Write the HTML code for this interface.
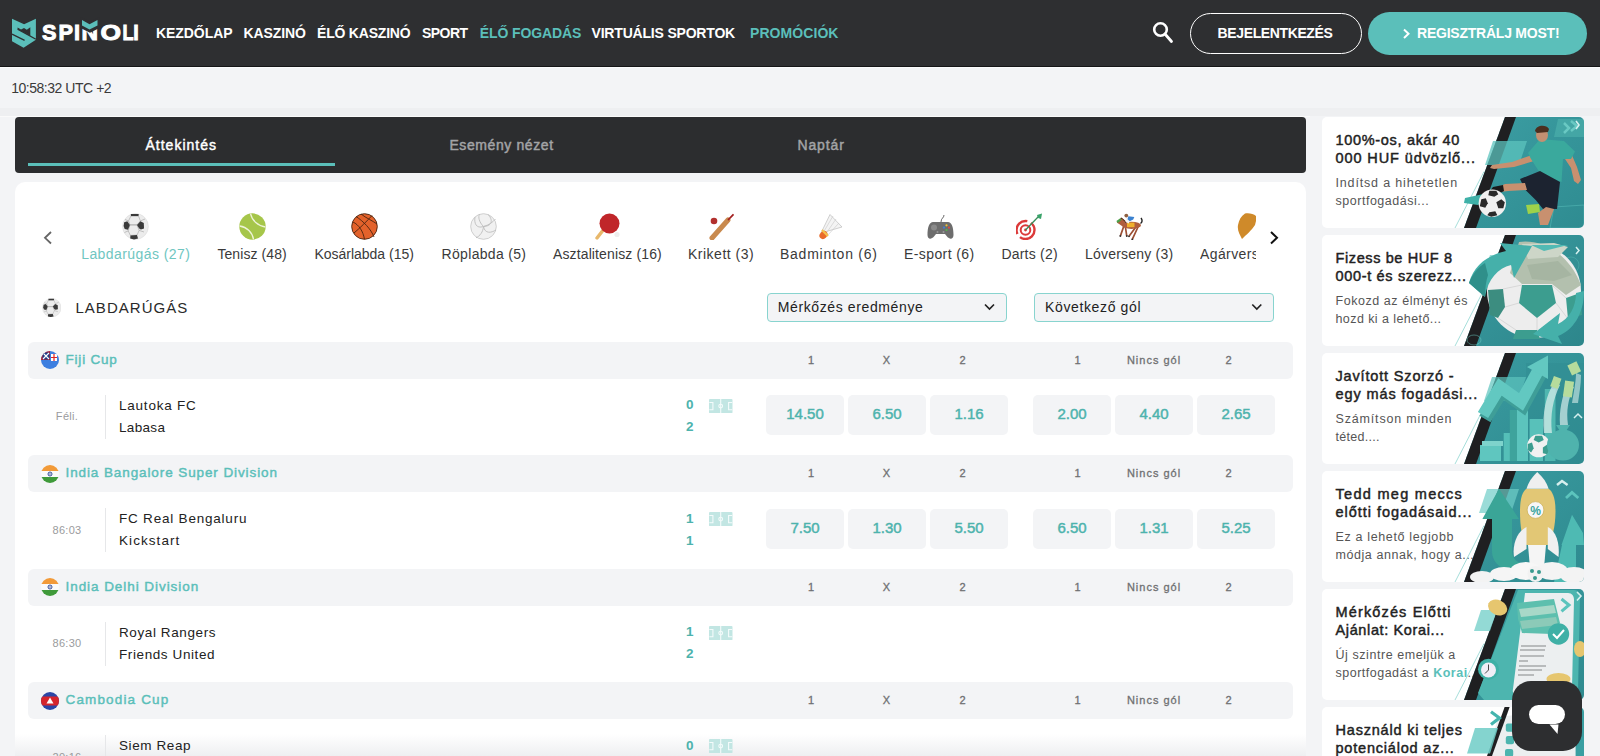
<!DOCTYPE html>
<html><head><meta charset="utf-8">
<style>
*{box-sizing:border-box;margin:0;padding:0}
html,body{width:1600px;height:756px;overflow:hidden;background:#f3f4f6;font-family:"Liberation Sans",sans-serif;color:#222}
.a{position:absolute;white-space:nowrap;line-height:1}
#hdr{position:absolute;left:0;top:0;width:1600px;height:67px;background:#2e2f31;border-bottom:1.5px solid #151617}
.nav{position:absolute;top:26px;font-weight:bold;font-size:14px;color:#fff;white-space:nowrap;line-height:1}
.nav.t{color:#5bbfba}
#tabs{position:absolute;left:15px;top:117px;width:1291px;height:56px;background:#2c2d2f;border-radius:4px}
.tab{position:absolute;top:138px;font-size:14px;color:#a3a4a6;-webkit-text-stroke:0.45px currentColor;white-space:nowrap;line-height:1}
#card{position:absolute;left:15px;top:182px;width:1291px;height:600px;background:linear-gradient(to bottom,#fff 0,#fff 552px,#eeeff1 574px);border-radius:10px}
.sp{position:absolute;top:247px;font-size:14px;color:#3a3a3a;white-space:nowrap;line-height:1}
.ico{position:absolute;top:213px;width:27px;height:27px}
.lg{position:absolute;left:28px;width:1265px;height:37px;background:#f3f4f6;border-radius:6px}
.lgn{position:absolute;left:37.5px;top:11px;font-size:13.5px;-webkit-text-stroke:0.45px currentColor;color:#5bbfba;white-space:nowrap;line-height:1}
.hl{position:absolute;top:13px;font-size:11px;-webkit-text-stroke:0.3px currentColor;color:#6f7072;line-height:1;white-space:nowrap;transform:translateX(-50%);letter-spacing:1.0px}
.flag{position:absolute;left:13px;top:9.5px;width:18px;height:18px;border-radius:50%;overflow:hidden}
.mt{position:absolute;left:0;width:1291px;height:76px}
.tm{position:absolute;font-size:11px;color:#9a9b9d;line-height:1;white-space:nowrap;transform:translateX(-50%);letter-spacing:0.3px}
.dv{position:absolute;left:105px;width:1px;background:#e6e7e9}
.team{position:absolute;left:119px;font-size:13.5px;color:#222;line-height:1;white-space:nowrap}
.sc{position:absolute;font-size:13.5px;font-weight:bold;color:#4db3ad;line-height:1}
.fld{position:absolute;width:23.5px;height:14.2px}
.odd{position:absolute;width:78px;height:40px;background:#f3f4f6;border-radius:5px;color:#4db3ad;-webkit-text-stroke:0.45px currentColor;font-size:15px;text-align:center;line-height:38px}
.promo{position:absolute;left:1322px;width:262px;height:111px;background:#fff;border-radius:5px;overflow:hidden}
.pt{position:absolute;left:13.5px;top:14px;letter-spacing:0.61px;font-size:14.5px;-webkit-text-stroke:0.45px currentColor;color:#222;line-height:18px;width:145px;white-space:nowrap}
.pd{position:absolute;left:13.5px;top:56.5px;letter-spacing:0.74px;font-size:12.5px;color:#555;line-height:18px;white-space:nowrap}
.pimg{position:absolute;left:130px;top:0;width:132px;height:111px}
</style></head><body>
<div id="hdr">
  <svg class="a" style="left:8px;top:14px" width="136" height="38" viewBox="8 14 136 38">
    <polygon points="12,18.8 24.1,24.3 35.9,18.8 35.9,39.7 23.6,47.7 12,41.2" fill="#5bbfba"/>
    <line x1="12" y1="34.1" x2="24.6" y2="40.3" stroke="#2e2f31" stroke-width="1.3"/>
    <line x1="17.6" y1="29.1" x2="35.9" y2="39.2" stroke="#2e2f31" stroke-width="1.3"/>
    <polygon points="17.6,27.4 21,29.4 24,28 26.8,29.8 30.3,27.3 30.3,36.1 17.6,29.1" fill="#2e2f31"/>
    <g font-family="Liberation Sans" font-weight="bold" font-size="22.8" fill="#fff" stroke="#fff" stroke-width="1" lengthAdjust="spacingAndGlyphs">
    <text x="42" y="40" textLength="14.5" lengthAdjust="spacingAndGlyphs">S</text>
    <text x="58.5" y="40" textLength="14.5" lengthAdjust="spacingAndGlyphs">P</text>
    <text x="74" y="40" textLength="6" lengthAdjust="spacingAndGlyphs">I</text>
    <text x="81.5" y="40" textLength="16.5" lengthAdjust="spacingAndGlyphs">N</text>
    <text x="100.5" y="40" textLength="20.5" lengthAdjust="spacingAndGlyphs">O</text>
    <text x="122.5" y="40" textLength="11" lengthAdjust="spacingAndGlyphs">L</text>
    <text x="133.2" y="40" textLength="5.5" lengthAdjust="spacingAndGlyphs">I</text>
    </g>
    <polygon points="80.5,17 90,21.8 99.5,17 99.5,28 90,32.8 80.5,28" fill="#2e2f31"/>
    <polygon points="82,20 89.5,24.2 97.5,20 97.5,25.5 89.5,29.6 82,25.5" fill="#5bbfba"/>
  </svg>
  <div class="nav" style="left:156px;letter-spacing:-0.07px">KEZDŐLAP</div>
  <div class="nav" style="left:243.5px;letter-spacing:-0.1px">KASZINÓ</div>
  <div class="nav" style="left:317px;letter-spacing:-0.2px">ÉLŐ KASZINÓ</div>
  <div class="nav" style="left:422px;letter-spacing:-0.55px">SPORT</div>
  <div class="nav t" style="left:479.7px;letter-spacing:-0.1px">ÉLŐ FOGADÁS</div>
  <div class="nav" style="left:591.5px;letter-spacing:-0.19px">VIRTUÁLIS SPORTOK</div>
  <div class="nav t" style="left:750px;letter-spacing:0.07px">PROMÓCIÓK</div>
  <svg class="a" style="left:1148px;top:18px" width="28" height="28" viewBox="1148 18 28 28">
    <circle cx="1160.5" cy="29.5" r="6.3" fill="none" stroke="#fff" stroke-width="2.6"/>
    <line x1="1165" y1="34" x2="1171.5" y2="41.5" stroke="#fff" stroke-width="2.8" stroke-linecap="round"/>
  </svg>
  <div class="a" style="left:1189.5px;top:13px;width:172px;height:41px;border:1.9px solid #fff;border-radius:21px"></div>
  <div class="nav" style="left:1217.6px;letter-spacing:-0.38px">BEJELENTKEZÉS</div>
  <div class="a" style="left:1367.5px;top:12px;width:219.5px;height:43px;background:#5bbfba;border-radius:22px"></div>
  <svg class="a" style="left:1400px;top:26px" width="14" height="15" viewBox="1400 26 14 15">
    <polyline points="1404,29.5 1408.5,33.7 1404,38" fill="none" stroke="#fff" stroke-width="2"/>
  </svg>
  <div class="nav" style="left:1417px;letter-spacing:-0.23px">REGISZTRÁLJ MOST!</div>
</div>
<div class="a" style="left:0;top:67px;width:1600px;height:1px;background:#fbfbfc"></div>
<div class="a" style="left:0;top:108px;width:1600px;height:8px;background:#eeeff1"></div>
<div class="a" style="left:0;top:116px;width:1310px;height:1px;background:#fafafa"></div>
<div class="a" style="left:11.2px;top:81px;font-size:14px;color:#3a3a3a;letter-spacing:-0.47px">10:58:32 UTC +2</div>
<div id="tabs">
  <div class="a" style="left:13px;top:46.3px;width:307.3px;height:3.2px;background:#5bbfba"></div>
</div>
<div class="tab" style="left:145.5px;color:#fff;letter-spacing:1.0px">Áttekintés</div>
<div class="tab" style="left:449.4px;letter-spacing:0.6px">Esemény nézet</div>
<div class="tab" style="left:797.4px;letter-spacing:0.88px">Naptár</div>
<div id="card"></div>
<!-- carousel -->
<svg class="a" style="left:40px;top:228px" width="16" height="20" viewBox="40 228 16 20"><polyline points="51,232 45,237.8 51,243.5" fill="none" stroke="#666" stroke-width="1.8"/></svg>
<svg class="a" style="left:1265px;top:228px" width="18" height="20" viewBox="1265 228 18 20"><polyline points="1271,232 1277,237.8 1271,243.5" fill="none" stroke="#111" stroke-width="2"/></svg>
<!-- soccer -->
<svg class="ico" style="left:122px" viewBox="0 0 27 27">
  <circle cx="13.5" cy="13.5" r="12.9" fill="#ececec" stroke="#d6d6d6" stroke-width="0.5"/>
  <g fill="none" stroke="#9a9a9a" stroke-width="0.55"><polygon points="8.9,3.1 16.5,3.1 18.4,7.9 15,11.9 7.9,11.9 6.5,7.9"/><polygon points="7.9,11.9 15,11.9 17.2,17.4 15,22.1 8.4,22.4 6.2,17.9"/><path d="M6.5,7.9 L3,6.5 M18.4,7.9 L23,6 M17.2,17.4 L22,19 M6.2,17.9 L2.5,19.5"/></g>
  <polygon points="8.9,1 16.7,1 16.5,3.1 8.9,3.1" fill="#3a3a3a"/>
  <polygon points="2.2,9.3 5.3,8.3 7.9,11.9 6,16.7 2.7,16 1.6,13" fill="#3a3a3a"/>
  <polygon points="15,11.9 18.4,8.3 21.8,10 22,15.5 18.9,16.4 17.2,15.5" fill="#3a3a3a"/>
  <polygon points="8.4,22.4 15,22.1 16,25.6 12,26.4 8.2,25.6" fill="#3a3a3a"/>
</svg>
<div class="sp" style="left:81.2px;letter-spacing:0.42px;color:#6fc6c1">Labdarúgás (27)</div>
<!-- tennis -->
<svg class="ico" style="left:238.5px" viewBox="0 0 27 27">
  <circle cx="13.5" cy="13.5" r="13.2" fill="#a6c64a"/>
  <path d="M11.5,0.6 C13,7.5 19,13 26.4,14" fill="none" stroke="#eef3d8" stroke-width="1.3"/>
  <path d="M0.6,13 C8,14 13.5,19.5 14.5,26.4" fill="none" stroke="#eef3d8" stroke-width="1.3"/>
</svg>
<div class="sp" style="left:217.4px;letter-spacing:0.08px">Tenisz (48)</div>
<!-- basketball -->
<svg class="ico" style="left:351px" viewBox="0 0 27 27">
  <circle cx="13.5" cy="13.5" r="12.8" fill="#e3622b"/>
  <g fill="none" stroke="#4a2410" stroke-width="0.9">
    <circle cx="13.5" cy="13.5" r="12.8"/>
    <path d="M5,3.5 C12,8 20,16 23,24"/><path d="M2,9 C8,12 12,18 13.5,26.3"/><path d="M10,1 C15,5 22,8 26,11"/><path d="M3,20 C9,15 17,7 21,2.5"/>
  </g>
</svg>
<div class="sp" style="left:314.4px;letter-spacing:-0.01px">Kosárlabda (15)</div>
<!-- volleyball -->
<svg class="ico" style="left:470px" viewBox="0 0 27 27">
  <circle cx="13.5" cy="13.5" r="12.8" fill="#f1f1f1" stroke="#c9c9c9" stroke-width="0.9"/>
  <g fill="none" stroke="#bdbdbd" stroke-width="0.9">
    <path d="M13.5,13.5 C9,9 8,4 9.5,1.3"/><path d="M13.5,13.5 C19,12 23,9 25.5,6"/><path d="M13.5,13.5 C13,19 10,23 6,24.8"/>
    <path d="M5,4 C4,10 6,16 13.5,13.5"/><path d="M18,1.5 C22,5 24,13 13.5,13.5"/><path d="M26,17 C21,20 15,21 13.5,13.5"/>
  </g>
</svg>
<div class="sp" style="left:441.6px;letter-spacing:0.31px">Röplabda (5)</div>
<!-- table tennis -->
<svg class="ico" style="left:594px" viewBox="0 0 27 27">
  <path d="M3,25 L10,16" stroke="#e8b86c" stroke-width="3.4" stroke-linecap="round"/>
  <circle cx="15.5" cy="10.5" r="10" fill="#c0262a"/>
  <circle cx="23" cy="21.5" r="2.6" fill="#eeeeee"/>
</svg>
<div class="sp" style="left:553px;letter-spacing:0.125px">Asztalitenisz (16)</div>
<!-- cricket -->
<svg class="ico" style="left:707.5px" viewBox="0 0 27 27">
  <path d="M4,25 L20,7" stroke="#c98a4e" stroke-width="5" stroke-linecap="round"/>
  <path d="M20.5,6.5 L25,1.8" stroke="#a32020" stroke-width="1.8" stroke-linecap="round"/>
  <circle cx="6" cy="8" r="3.3" fill="#b2302e"/>
</svg>
<div class="sp" style="left:688px;letter-spacing:0.5px">Krikett (3)</div>
<!-- badminton -->
<svg class="ico" style="left:816px" viewBox="0 0 27 27">
  <path d="M5,20 L14,1.5 L26,14 Z" fill="#f4f4f4" stroke="#bdbdbd" stroke-width="0.7"/>
  <g stroke="#c7c7c7" stroke-width="0.6"><path d="M7,20 L17,3M9,22 L20,6M11,23 L23,10"/></g>
  <ellipse cx="7.5" cy="22" rx="4.4" ry="3.6" transform="rotate(-45 7.5 22)" fill="#e96a2a"/>
  <path d="M6,17 L12,23" stroke="#f5c14a" stroke-width="2.2"/>
</svg>
<div class="sp" style="left:780px;letter-spacing:0.75px">Badminton (6)</div>
<!-- esport -->
<svg class="ico" style="left:926.5px" viewBox="0 0 27 27">
  <path d="M14,9 C14,5 17,5 17,2" fill="none" stroke="#555" stroke-width="0.9"/>
  <path d="M6,9 H21 C24.5,9 26.5,14 26.5,22 C26.5,26 23,27 20,23.5 L18,21 H9 L7,23.5 C4,27 0.5,26 0.5,22 C0.5,14 2.5,9 6,9Z" fill="#6d6d6d"/>
  <circle cx="7" cy="14.5" r="3" fill="#8a8a8a"/>
  <circle cx="19.5" cy="12.3" r="1.1" fill="#f2c230"/><circle cx="22" cy="14.6" r="1.1" fill="#e2483b"/><circle cx="17" cy="14.6" r="1.1" fill="#3f7fd6"/><circle cx="19.5" cy="17" r="1.1" fill="#52b84a"/>
  <circle cx="10.5" cy="19" r="1" fill="#999"/><circle cx="16.5" cy="19" r="1" fill="#999"/>
</svg>
<div class="sp" style="left:904px;letter-spacing:0.4px">E-sport (6)</div>
<!-- darts -->
<svg class="ico" style="left:1016px" viewBox="0 0 27 27">
  <circle cx="9.5" cy="17" r="9" fill="none" stroke="#dc3a3a" stroke-width="2.4" stroke-dasharray="20 4"/>
  <circle cx="9.5" cy="17" r="4.8" fill="none" stroke="#dc3a3a" stroke-width="2"/>
  <circle cx="9.5" cy="17" r="1.4" fill="#dc3a3a"/>
  <path d="M9.5,17 L23,3" stroke="#3a8c5a" stroke-width="1.3"/>
  <polygon points="21,2 26,0.5 25,6 22,5" fill="#3aa36a"/>
</svg>
<div class="sp" style="left:1001.4px;letter-spacing:0.22px">Darts (2)</div>
<!-- horse -->
<svg class="ico" style="left:1115.5px" viewBox="0 0 27 27">
  <g stroke="#9c4f33" stroke-width="1.7" stroke-linecap="round" fill="none"><path d="M7.5,14 L4.5,22.6"/><path d="M9.5,14.5 L10.7,22.6"/><path d="M19.5,14.5 L13.2,23"/><path d="M22,14 L16.4,26.2"/></g>
  <g fill="#333"><circle cx="4.3" cy="23" r="0.9"/><circle cx="10.8" cy="23" r="0.9"/><circle cx="13" cy="23.3" r="0.9"/><circle cx="16.3" cy="26.3" r="0.9"/></g>
  <ellipse cx="15.5" cy="12.3" rx="9.5" ry="3.6" fill="#b05e3d"/>
  <path d="M5,4.5 C8,6 10,8.5 12,10 L10,15 L6,13 C4,11.5 2,10.5 0.8,9.5Z" fill="#b05e3d"/>
  <path d="M5,5 C7,6 9,8 10,10" stroke="#3a2a20" stroke-width="1" fill="none"/>
  <path d="M1,9 L5,6.2" stroke="#4aa04a" stroke-width="2.2"/>
  <path d="M24.5,10.5 C26.5,9 26.5,7 25,5" stroke="#222" stroke-width="1.4" fill="none"/>
  <rect x="11" y="9.6" width="7.5" height="4.6" fill="#efb02e"/>
  <path d="M10.5,4.5 L13.5,7.5 L13,10.5 L9.5,9Z" fill="#f4f4f4"/>
  <path d="M12.3,3.2 L18.3,4 L17.2,6.6 L13.8,8.2 L11.5,6.2Z" fill="#3b82d0"/>
  <circle cx="10.3" cy="2.6" r="1.9" fill="#8f5f40"/>
</svg>
<div class="sp" style="left:1085px;letter-spacing:0.21px">Lóverseny (3)</div>
<div class="a" style="left:1200px;top:200px;width:55.5px;height:70px;overflow:hidden">
  <svg class="a" style="left:37px;top:13px" width="27" height="27" viewBox="0 0 27 27">
    <path d="M8,0.5 C12,-0.5 18,1 20,4 L18,12 C15,17 9,22 5,26 C3,22 0,18 1,12 C2,7 4,3 8,0.5Z" fill="#cf8a2a"/>
  </svg>
  <div class="sp" style="left:0;top:47px;letter-spacing:0.4px">Agárverseny (2)</div>
</div>
<!-- section header -->
<svg class="a" style="left:41.5px;top:297.5px" width="19.5" height="19.5" viewBox="0 0 27 27">
  <circle cx="13.5" cy="13.5" r="12.9" fill="#ececec" stroke="#d6d6d6" stroke-width="0.5"/>
  <g fill="none" stroke="#9a9a9a" stroke-width="0.55"><polygon points="8.9,3.1 16.5,3.1 18.4,7.9 15,11.9 7.9,11.9 6.5,7.9"/><polygon points="7.9,11.9 15,11.9 17.2,17.4 15,22.1 8.4,22.4 6.2,17.9"/><path d="M6.5,7.9 L3,6.5 M18.4,7.9 L23,6 M17.2,17.4 L22,19 M6.2,17.9 L2.5,19.5"/></g>
  <polygon points="8.9,1 16.7,1 16.5,3.1 8.9,3.1" fill="#3a3a3a"/>
  <polygon points="2.2,9.3 5.3,8.3 7.9,11.9 6,16.7 2.7,16 1.6,13" fill="#3a3a3a"/>
  <polygon points="15,11.9 18.4,8.3 21.8,10 22,15.5 18.9,16.4 17.2,15.5" fill="#3a3a3a"/>
  <polygon points="8.4,22.4 15,22.1 16,25.6 12,26.4 8.2,25.6" fill="#3a3a3a"/>
</svg>
<div class="a" style="left:75.4px;top:300px;font-size:15px;color:#2a2a2a;letter-spacing:1.05px">LABDARÚGÁS</div>
<div class="a" style="left:767px;top:293px;width:240px;height:29px;background:#f3f4f6;border:1.5px solid #88d4cf;border-radius:4px"></div>
<div class="a" style="left:777.7px;top:300px;font-size:14px;color:#222;letter-spacing:0.62px">Mérkőzés eredménye</div>
<svg class="a" style="left:982px;top:301px" width="15" height="12" viewBox="982 301 15 12"><polyline points="985,304.5 989.5,309 994,304.5" fill="none" stroke="#222" stroke-width="1.7"/></svg>
<div class="a" style="left:1034px;top:293px;width:240px;height:29px;background:#f3f4f6;border:1.5px solid #88d4cf;border-radius:4px"></div>
<div class="a" style="left:1045px;top:300px;font-size:14px;color:#222;letter-spacing:0.63px">Következő gól</div>
<svg class="a" style="left:1249px;top:301px" width="15" height="12" viewBox="1249 301 15 12"><polyline points="1252.3,304.5 1256.8,309 1261.3,304.5" fill="none" stroke="#222" stroke-width="1.7"/></svg>
<!-- leagues -->
<div class="lg" style="top:341.5px"><svg class="flag" viewBox="0 0 18 18"><rect width="18" height="18" fill="#3d7fe0"/><rect x="0" y="0" width="9" height="9" fill="#c8202a"/><rect x="1.5" y="1.5" width="7" height="7" fill="#1a3d8a"/><path d="M2,2 L8,8M8,2 L2,8" stroke="#fff" stroke-width="1.2"/><rect x="10" y="3" width="6" height="7" fill="#fff"/><path d="M13,3 V10M10,6.5 H16" stroke="#d22" stroke-width="1.2"/></svg><div class="lgn" style="letter-spacing:0.8px">Fiji Cup</div>
<div class="hl" style="left:783.5px">1</div>
<div class="hl" style="left:859px">X</div>
<div class="hl" style="left:935px">2</div>
<div class="hl" style="left:1050px">1</div>
<div class="hl" style="left:1126px">Nincs gól</div>
<div class="hl" style="left:1201px">2</div>
</div>
<div class="tm" style="left:67px;top:411.0px">Féli.</div>
<div class="dv" style="top:394.5px;height:44px"></div>
<div class="team" style="top:398.5px;letter-spacing:0.78px">Lautoka FC</div>
<div class="team" style="top:420.5px;letter-spacing:0.32px">Labasa</div>
<div class="sc" style="left:686px;top:398.0px">0</div>
<div class="sc" style="left:686px;top:420.0px">2</div>
<svg class="fld" style="left:709.3px;top:398.6px" viewBox="0 0 23.5 14.2"><rect width="23.5" height="14.2" rx="1" fill="#c2e6e3"/><g fill="none" stroke="#f4fbfb" stroke-width="1.1"><path d="M11.7,0V14.2"/><circle cx="11.7" cy="7.1" r="1.9"/><path d="M0.3,3.5 H3.9 V10.7 H0.3"/><path d="M23.2,3.5 H19.6 V10.7 H23.2"/></g></svg>
<div class="odd" style="left:766px;top:395.0px">14.50</div>
<div class="odd" style="left:848px;top:395.0px">6.50</div>
<div class="odd" style="left:930px;top:395.0px">1.16</div>
<div class="odd" style="left:1033px;top:395.0px">2.00</div>
<div class="odd" style="left:1115px;top:395.0px">4.40</div>
<div class="odd" style="left:1197px;top:395.0px">2.65</div>
<div class="lg" style="top:455px"><svg class="flag" viewBox="0 0 18 18"><rect width="18" height="6" fill="#f29a38"/><rect y="6" width="18" height="6" fill="#fafafa"/><rect y="12" width="18" height="6" fill="#3f9a3a"/><circle cx="9" cy="9" r="2" fill="none" stroke="#1e3a8c" stroke-width="0.9"/><circle cx="9" cy="9" r="0.7" fill="#1e3a8c"/></svg><div class="lgn" style="letter-spacing:0.9px">India Bangalore Super Division</div>
<div class="hl" style="left:783.5px">1</div>
<div class="hl" style="left:859px">X</div>
<div class="hl" style="left:935px">2</div>
<div class="hl" style="left:1050px">1</div>
<div class="hl" style="left:1126px">Nincs gól</div>
<div class="hl" style="left:1201px">2</div>
</div>
<div class="tm" style="left:67px;top:524.5px">86:03</div>
<div class="dv" style="top:508px;height:44px"></div>
<div class="team" style="top:512px;letter-spacing:0.79px">FC Real Bengaluru</div>
<div class="team" style="top:534px;letter-spacing:1.07px">Kickstart</div>
<div class="sc" style="left:686px;top:511.5px">1</div>
<div class="sc" style="left:686px;top:533.5px">1</div>
<svg class="fld" style="left:709.3px;top:512.1px" viewBox="0 0 23.5 14.2"><rect width="23.5" height="14.2" rx="1" fill="#c2e6e3"/><g fill="none" stroke="#f4fbfb" stroke-width="1.1"><path d="M11.7,0V14.2"/><circle cx="11.7" cy="7.1" r="1.9"/><path d="M0.3,3.5 H3.9 V10.7 H0.3"/><path d="M23.2,3.5 H19.6 V10.7 H23.2"/></g></svg>
<div class="odd" style="left:766px;top:508.5px">7.50</div>
<div class="odd" style="left:848px;top:508.5px">1.30</div>
<div class="odd" style="left:930px;top:508.5px">5.50</div>
<div class="odd" style="left:1033px;top:508.5px">6.50</div>
<div class="odd" style="left:1115px;top:508.5px">1.31</div>
<div class="odd" style="left:1197px;top:508.5px">5.25</div>
<div class="lg" style="top:568.5px"><svg class="flag" viewBox="0 0 18 18"><rect width="18" height="6" fill="#f29a38"/><rect y="6" width="18" height="6" fill="#fafafa"/><rect y="12" width="18" height="6" fill="#3f9a3a"/><circle cx="9" cy="9" r="2" fill="none" stroke="#1e3a8c" stroke-width="0.9"/><circle cx="9" cy="9" r="0.7" fill="#1e3a8c"/></svg><div class="lgn" style="letter-spacing:0.94px">India Delhi Division</div>
<div class="hl" style="left:783.5px">1</div>
<div class="hl" style="left:859px">X</div>
<div class="hl" style="left:935px">2</div>
<div class="hl" style="left:1050px">1</div>
<div class="hl" style="left:1126px">Nincs gól</div>
<div class="hl" style="left:1201px">2</div>
</div>
<div class="tm" style="left:67px;top:638.0px">86:30</div>
<div class="dv" style="top:621.5px;height:44px"></div>
<div class="team" style="top:625.5px;letter-spacing:0.6px">Royal Rangers</div>
<div class="team" style="top:647.5px;letter-spacing:0.6px">Friends United</div>
<div class="sc" style="left:686px;top:625.0px">1</div>
<div class="sc" style="left:686px;top:647.0px">2</div>
<svg class="fld" style="left:709.3px;top:625.6px" viewBox="0 0 23.5 14.2"><rect width="23.5" height="14.2" rx="1" fill="#c2e6e3"/><g fill="none" stroke="#f4fbfb" stroke-width="1.1"><path d="M11.7,0V14.2"/><circle cx="11.7" cy="7.1" r="1.9"/><path d="M0.3,3.5 H3.9 V10.7 H0.3"/><path d="M23.2,3.5 H19.6 V10.7 H23.2"/></g></svg>
<div class="lg" style="top:682px"><svg class="flag" viewBox="0 0 18 18"><rect width="18" height="18" fill="#2b46a6"/><rect y="4.5" width="18" height="9" fill="#d6242c"/><polygon points="9,5.5 12.5,11.5 5.5,11.5" fill="#fff"/></svg><div class="lgn" style="letter-spacing:1.15px">Cambodia Cup</div>
<div class="hl" style="left:783.5px">1</div>
<div class="hl" style="left:859px">X</div>
<div class="hl" style="left:935px">2</div>
<div class="hl" style="left:1050px">1</div>
<div class="hl" style="left:1126px">Nincs gól</div>
<div class="hl" style="left:1201px">2</div>
</div>
<div class="tm" style="left:67px;top:751.5px">20:16</div>
<div class="dv" style="top:735px;height:44px"></div>
<div class="team" style="top:739px;letter-spacing:0.6px">Siem Reap</div>
<div class="team" style="top:761px;letter-spacing:0.6px">Preah Khan</div>
<div class="sc" style="left:686px;top:738.5px">0</div>
<div class="sc" style="left:686px;top:760.5px">0</div>
<svg class="fld" style="left:709.3px;top:739.1px" viewBox="0 0 23.5 14.2"><rect width="23.5" height="14.2" rx="1" fill="#c2e6e3"/><g fill="none" stroke="#f4fbfb" stroke-width="1.1"><path d="M11.7,0V14.2"/><circle cx="11.7" cy="7.1" r="1.9"/><path d="M0.3,3.5 H3.9 V10.7 H0.3"/><path d="M23.2,3.5 H19.6 V10.7 H23.2"/></g></svg>
<!-- promos -->
<div class="promo" style="top:117px">
  <div class="pt"><span style="letter-spacing:0.68px">100%-os, akár 40</span><br><span style="letter-spacing:0.9px">000 HUF üdvözlő...</span></div>
  <div class="pd"><span style="letter-spacing:0.84px">Indítsd a hihetetlen</span><br><span style="letter-spacing:0.52px">sportfogadási...</span></div>
  <svg class="pimg" viewBox="130 0 132 111">
    <defs><linearGradient id="g1" x1="0" y1="0" x2="1" y2="1"><stop offset="0" stop-color="#3c9ea3"/><stop offset="1" stop-color="#2f8c91"/></linearGradient></defs>
    <polygon points="183,0 262,0 262,111 142,111" fill="url(#g1)"/>
    <polygon points="183,0 194,0 154,111 142,111" fill="#1f1f21"/>
    <line x1="162" y1="54.5" x2="133" y2="111" stroke="#8fd6d1" stroke-width="0.8"/>
    <polygon points="171,24 205,24 197,48 163,48" fill="#5cc3bd" opacity="0.75"/>
    <polygon points="236,2 262,2 262,20 232,20" fill="#4fb3ae" opacity="0.6"/>
    <path d="M242,6 L247,11 L242,16 M249,4 L255,9 L249,14" stroke="#69c9c3" stroke-width="2.5" fill="none"/>
    <path d="M254,4 L257,8 L254,12" stroke="#d5f0ef" stroke-width="1.6" fill="none"/>
    <polygon points="232,90 262,88 262,111 228,111" fill="none" stroke="#5cc3bd" stroke-width="0.8" opacity="0.6"/>
    <!-- arms -->
    <path d="M210,38 L190,45 L170,48 L168,51 L172,52 L192,50 L212,44Z" fill="#c8906f"/>
    <path d="M249,36 L255,50 L259,63 L256,67 L252,64 L249,51 L243,42Z" fill="#c8906f"/>
    <!-- torso -->
    <path d="M206,36 L218,22 L242,24 L253,34.5 L249,42 L241,42 L239.5,65 L218,56 L209,42Z" fill="#3aa99d"/>
    <!-- head -->
    <ellipse cx="220" cy="18" rx="6" ry="7" fill="#c39072"/>
    <path d="M213,14 C214,8 224,7 227,12 L226,15 L215,16Z" fill="#4b2f1f"/>
    <!-- shorts -->
    <path d="M198,62 L218,54 L238,65 L235,92 L221,92 L213.7,83 L203,72.6Z" fill="#1c2330"/>
    <!-- extended leg -->
    <path d="M203,66 L183,67 L176,70 L178,75 L186,74 L205,73Z" fill="#c8906f"/>
    <path d="M181,68 L171,70 L165,78 L170,80 L182,74Z" fill="#1a1a1a"/>
    <path d="M166,76 L143,81 L142,86 L156,88 L169,81Z" fill="#3fb1a8"/>
    <!-- other leg -->
    <path d="M224,90 L232,92 L226,108 L218,108 L216,96Z" fill="#c8906f"/>
    <path d="M204,88 L217,87 L218,95 L206,97Z" fill="#9ed24a"/>
    <g transform="translate(170.3,86.3)"><circle cx="0" cy="0" r="13.7" fill="#f0f0f0"/>
      <polygon points="-3,-12.5 4,-12.5 6,-9 2,-6.5 -4,-8" fill="#2a2a2a"/>
      <polygon points="-11,-4 -6.5,-5 -4.5,0 -7,4.5 -12.5,3" fill="#2a2a2a"/>
      <polygon points="4,-1 9,-4 12.5,-1 11,5 6,5" fill="#2a2a2a"/>
      <polygon points="-3,9 3,8 5,12 -1,13.5 -5,12" fill="#2a2a2a"/></g>
  </svg>
</div>
<div class="promo" style="top:235px">
  <div class="pt"><span style="letter-spacing:0.61px">Fizess be HUF 8</span><br><span style="letter-spacing:0.67px">000-t és szerezz...</span></div>
  <div class="pd"><span style="letter-spacing:0.55px">Fokozd az élményt és</span><br><span style="letter-spacing:0.42px">hozd ki a lehető...</span></div>
  <svg class="pimg" viewBox="130 0 132 111">
    <defs><linearGradient id="g2" x1="0" y1="0" x2="1" y2="1"><stop offset="0" stop-color="#3a9ca1"/><stop offset="1" stop-color="#2d868b"/></linearGradient></defs>
    <polygon points="183,0 262,0 262,111 142,111" fill="url(#g2)"/>
    <polygon points="183,0 194,0 154,111 142,111" fill="#1f1f21"/>
    <line x1="162" y1="54.5" x2="133" y2="111" stroke="#8fd6d1" stroke-width="0.8"/>
    <polygon points="168,20 196,20 188,42 160,42" fill="#5cc3bd" opacity="0.6"/>
    <circle cx="249" cy="30" r="8" fill="none" stroke="#5cc3bd" stroke-width="0.6" opacity="0.6"/>
    <path d="M254,12 L257,15.5 L254,19" stroke="#d5f0ef" stroke-width="1.5" fill="none"/>
    <circle cx="212" cy="56" r="47" fill="#ededed"/>
    <path d="M197,7 C215,4 245,14 259,50 L244,60 L230,49 L200,49 L188,38Z" fill="#b3c0ae"/>
    <path d="M200,9 L232,8 L246,12 L236,22 L206,24Z" fill="#cdd6c8"/>
    <path d="M205,30 L236,26 L250,40 L232,46 L210,44Z" fill="#a6b5a2"/>
    <polygon points="200,50 230,50 234,68 215,83 197,68" fill="#3c9d8f"/>
    <polygon points="166,55 181,54 183,72 176,83 168,80" fill="#3c8d80"/>
    <polygon points="244,63 258,58 260,80 246,84" fill="#3c9d8f"/>
    <polygon points="194,95 215,95 218,104 191,104" fill="#3c9d8f"/>
    <g stroke="#cfcfcf" stroke-width="0.7" fill="none"><path d="M181,54 L200,50 M230,50 L244,63 M183,72 L197,68 M234,68 L246,84 M215,83 L215,95 M176,83 L194,95"/></g>
    <path d="M147,48 C152,30 166,20 184,16 L178,8 L210,11 L192,43 L189,30 C176,33 166,44 163,62 Z" fill="#45b0aa"/><path d="M147,48 C150,40 156,32 163,28 L166,40 C164,46 163,54 163,62Z" fill="#2f8f8a"/>
    <path d="M209,10 L246,10 L222,16Z" fill="#52bab4"/>
    <path d="M262,56 C262,80 250,96 236,101 L240,109 L211,99 L238,78 L236,89 C247,84 254,72 254,58 Z" fill="#45b0aa"/>
    <ellipse cx="152" cy="105" rx="7" ry="5" fill="none" stroke="#6fd0c9" stroke-width="0.8" opacity="0.6"/>
  </svg>
</div>
<div class="promo" style="top:353px">
  <div class="pt"><span style="letter-spacing:0.84px">Javított Szorzó -</span><br><span style="letter-spacing:0.89px">egy más fogadási...</span></div>
  <div class="pd"><span style="letter-spacing:0.83px">Számítson minden</span><br><span style="letter-spacing:0.28px">téted....</span></div>
  <svg class="pimg" viewBox="130 0 132 111">
    <defs><linearGradient id="g3" x1="0" y1="0" x2="1" y2="1"><stop offset="0" stop-color="#3a9ca1"/><stop offset="1" stop-color="#2f8a8f"/></linearGradient></defs>
    <polygon points="183,0 262,0 262,111 142,111" fill="url(#g3)"/>
    <polygon points="183,0 194,0 154,111 142,111" fill="#1f1f21"/>
    <line x1="162" y1="54.5" x2="133" y2="111" stroke="#8fd6d1" stroke-width="0.8"/>
    <polygon points="170,24 204,24 196,48 162,48" fill="#5cc3bd" opacity="0.7"/>
    <rect x="204" y="10" width="58" height="100" fill="#2f8c91" opacity="0.5"/>
    <rect x="158" y="92" width="21" height="16" fill="#5fc6bf"/>
    <rect x="160" y="88" width="21" height="5" fill="#7ed3cc"/>
    <rect x="181.7" y="80" width="12.5" height="28" fill="#55bfb8"/>
    <rect x="187.8" y="57" width="18" height="51" fill="#3ea39c"/>
    <rect x="195" y="57" width="11" height="51" fill="#5cc4bd"/>
    <rect x="207.6" y="66" width="13.4" height="42" fill="#58c1ba"/>
    <rect x="222.8" y="36" width="10.7" height="72" fill="#4fb7b0"/>
    <polyline points="163,66 180,38 201,53 219,20" fill="none" stroke="#3f9e98" stroke-width="13" stroke-linejoin="miter"/>
    <polyline points="161,62 178,34 199,49 217,16" fill="none" stroke="#62c8c1" stroke-width="12" stroke-linejoin="miter"/>
    <polygon points="205,14 226,2.6 226,26" fill="#62c8c1"/>
    <path d="M222,80 C220,60 224,42 232,30 L238,32 C231,46 228,62 230,80Z" fill="#d6ecea" opacity="0.75"/>
    <path d="M238,72 C237,58 240,44 245,32 L252,34 C246,46 244,58 246,72Z" fill="#d6ecea" opacity="0.7"/>
    <path d="M250,50 C252,38 254,28 254,20 L259,22 C259,32 257,42 256,50Z" fill="#d6ecea" opacity="0.6"/>
    <rect x="230" y="24" width="8" height="11" fill="#b6dc9c" transform="rotate(20 234 29)"/>
    <rect x="242" y="28" width="9" height="16" fill="#b6dc9c" transform="rotate(8 246 36)"/>
    <rect x="247" y="10" width="10" height="11" fill="#b6dc9c" transform="rotate(-25 252 15)"/>
    <g transform="translate(216.7,92.8) scale(0.84)"><circle r="13.7" fill="#f1f1f1"/><polygon points="-4,-12 4,-12 6,-7 0,-4 -6,-7" fill="#3c9d8f"/><polygon points="-13,-2 -8,-4 -6,3 -9,8 -13,5" fill="#3c9d8f"/><polygon points="5,2 11,-2 13.5,4 10,10 5,9" fill="#3c9d8f"/></g>
    <ellipse cx="241" cy="92" rx="16" ry="15.5" fill="#4fb3ad"/>
    <path d="M234,72 L248,72 L244,78 L238,78Z" fill="#4fb3ad"/>
    <path d="M252,65 L256,61 L260,65" stroke="#d5f0ef" stroke-width="1.5" fill="none"/>
  </svg>
</div>
<div class="promo" style="top:471px">
  <div class="pt"><span style="letter-spacing:1.29px">Tedd meg meccs</span><br><span style="letter-spacing:0.97px">előtti fogadásaid...</span></div>
  <div class="pd"><span style="letter-spacing:0.65px">Ez a lehető legjobb</span><br><span style="letter-spacing:0.56px">módja annak, hogy a...</span></div>
  <svg class="pimg" viewBox="130 0 132 111">
    <defs><linearGradient id="g4" x1="0" y1="0" x2="1" y2="1"><stop offset="0" stop-color="#3a9ca1"/><stop offset="1" stop-color="#2f8a8f"/></linearGradient></defs>
    <polygon points="183,0 262,0 262,111 142,111" fill="url(#g4)"/>
    <polygon points="183,0 194,0 154,111 142,111" fill="#1f1f21"/>
    <line x1="162" y1="54.5" x2="133" y2="111" stroke="#8fd6d1" stroke-width="0.8"/>
    <polygon points="165,18 197,18 189,42 157,42" fill="#6fcdc7" opacity="0.7"/>
    <path d="M177,17.8 L197,48 L190,48 L190,80 C190,90 200,96 214,92 L206,100 C188,104 170,96 170,80 L170,48 L160.4,48Z" fill="#3aa597"/>
    <path d="M250,43.7 L261,62 L262,74 L254,74 L254,111 L232,111 L240,74 L239.5,74Z" fill="#4ebab3"/>
    <path d="M235,14 L240,10 L245.6,14" stroke="#d6efee" stroke-width="2.4" fill="none"/>
    <path d="M244,27 L250,21.5 L256.3,27" stroke="#5cc4bd" stroke-width="2.8" fill="none"/>
    <path d="M198,40 C198,26 201,20 204.5,17.8 L226.6,17.8 C230,20 233.5,26 233.5,40 C233.5,56 230,68 225.8,74 L204.5,74 C200,68 198,56 198,40Z" fill="#e2c775"/>
    <path d="M215.2,1 C210,6 206,12 204.5,17.8 L226.6,17.8 C225,12 221,6 215.2,1Z" fill="#efefef"/>
    <circle cx="213.5" cy="39" r="8.4" fill="#f7f7f7" stroke="#cdb15a" stroke-width="0.8"/>
    <text x="213.5" y="43.5" font-family="Liberation Sans" font-weight="bold" font-size="12" fill="#3aa59f" text-anchor="middle">%</text>
    <path d="M204.5,56 C196,60 190,72 192,86 L204.5,78Z" fill="#f0f0f0"/>
    <path d="M225.8,56 C234,60 238,72 236.5,86 L225.8,78Z" fill="#f0f0f0"/>
    <path d="M206,74 L224,74 L222,97 L208,97Z" fill="#f5f5f5"/>
    <ellipse cx="160" cy="106" rx="12" ry="6" fill="#f3f3f3"/><ellipse cx="182" cy="103" rx="14" ry="7" fill="#f5f5f5"/><ellipse cx="204" cy="100" rx="16" ry="9" fill="#f7f7f7"/><ellipse cx="230" cy="100" rx="16" ry="9" fill="#f4f4f4"/><ellipse cx="252" cy="104" rx="14" ry="8" fill="#f3f3f3"/>
    <circle cx="213.5" cy="103" r="8" fill="#f2f2f2"/><circle cx="210" cy="100" r="2" fill="#3a9a8e"/><circle cx="217" cy="101" r="2" fill="#3a9a8e"/><circle cx="213" cy="107" r="2" fill="#3a9a8e"/>
  </svg>
</div>
<div class="promo" style="top:589px">
  <div class="pt"><span style="letter-spacing:1.14px">Mérkőzés Előtti</span><br><span style="letter-spacing:0.63px">Ajánlat: Korai...</span></div>
  <div class="pd"><span style="letter-spacing:0.56px">Új szintre emeljük a</span><br><span style="letter-spacing:0.5px">sportfogadást a <b style="color:#5bbfba">Korai</b>...</span></div>
  <svg class="pimg" viewBox="130 0 132 111">
    <defs><linearGradient id="g5" x1="0" y1="0" x2="1" y2="1"><stop offset="0" stop-color="#3a9ca1"/><stop offset="1" stop-color="#2f8a8f"/></linearGradient></defs>
    <polygon points="183,0 262,0 262,111 142,111" fill="url(#g5)"/>
    <polygon points="183,0 194,0 154,111 142,111" fill="#1f1f21"/>
    <line x1="162" y1="54.5" x2="133" y2="111" stroke="#8fd6d1" stroke-width="0.8"/>
    <polygon points="159,21 175,21 168,42 152,42" fill="#6fcdc7" opacity="0.75"/>
    <path d="M196,1 L252,1 C256,1 258,4 258,8 L256,104 C256,108 254,111 250,111 L162,111 L156,104Z" fill="#4db5af"/>
    <path d="M203,4 L246,4 C250,4 252,7 252,11 L250,100 C250,104 248,106 244,106 L196,106 C192,106 190,104 191,100Z" fill="#eceff0"/>
    <g stroke="#a6abab" stroke-width="1.5"><path d="M199,57H224M198,61H223M198,67H222M197,72H206M197,77H224M196,81H220M196,86H212"/></g>
    <path d="M195,14 L232,10 L238,34 L230,45 L200,44 L196,30Z" fill="#5dbfae"/>
    <path d="M197,20 L232,16 L234,24 L199,28Z" fill="#a8d8c8"/>
    <path d="M198,32 L234,28 L236,36 L200,40Z" fill="#8ccab8"/>
    <path d="M239.5,10 L247,16 L239.5,22.4" stroke="#5cc4bd" stroke-width="3" fill="none"/>
    <path d="M255,3 L259,7 L255,11.5" stroke="#d5f0ef" stroke-width="1.6" fill="none"/>
    <circle cx="236.5" cy="45" r="10.7" fill="#3fb0a6"/>
    <path d="M231,45 L235,49 L242,41" stroke="#fff" stroke-width="2" fill="none"/>
    <ellipse cx="175.6" cy="18.5" rx="10" ry="7.5" transform="rotate(25 175.6 18.5)" fill="#e6c66f"/>
    <ellipse cx="258" cy="60" rx="6" ry="8" fill="#e6c66f"/>
    <ellipse cx="236.5" cy="90" rx="12" ry="6" fill="#e6c66f"/>
    <circle cx="166.5" cy="80.2" r="10.5" fill="#3fb0a6"/><circle cx="166.5" cy="81" r="7.5" fill="#f0eef6"/>
    <path d="M166.5,75.5 V81 L163,84.5" stroke="#333" stroke-width="0.9" fill="none"/>
  </svg>
</div>
<div class="promo" style="top:707px">
  <div class="pt"><span style="letter-spacing:0.8px">Használd ki teljes</span><br><span style="letter-spacing:0.8px">potenciálod az...</span></div>
  <svg class="pimg" viewBox="130 0 132 111">
    <polygon points="176,10 262,0 262,111 150,111" fill="#eceff0"/>
    <polygon points="253.6,0 262,0 262,111 253.6,111" fill="#3a9fa2"/>
    <polygon points="183,-1 188,-1 170,49 165,49" fill="#1f1f21"/>
    <polygon points="153,21 176,21 168,46.5 145,46.5" fill="#6fcdc7" opacity="0.85"/>
    <path d="M169,4.8 L177.4,11 L169,17.5" stroke="#45b5ae" stroke-width="3.2" fill="none"/>
    <rect x="183.8" y="16.6" width="8.2" height="8.2" rx="2" fill="#4db5af"/>
    <rect x="183.8" y="29" width="8.2" height="8.2" rx="2" fill="#4db5af"/>
    <rect x="183" y="42" width="8.2" height="8" rx="2" fill="#4db5af"/>
  </svg>
</div>
<!-- chat -->
<div class="a" style="left:1512px;top:681px;width:70px;height:69.5px;background:#2d2e30;border-radius:19px"></div>
<div class="a" style="left:1528.5px;top:704.5px;width:36.5px;height:19.5px;background:#fff;border-radius:10px"></div>
<svg class="a" style="left:1548px;top:722px" width="12" height="14" viewBox="1548 722 12 14"><polygon points="1549.5,724.5 1558.5,724.5 1557.5,734" fill="#fff"/></svg>
</body></html>
